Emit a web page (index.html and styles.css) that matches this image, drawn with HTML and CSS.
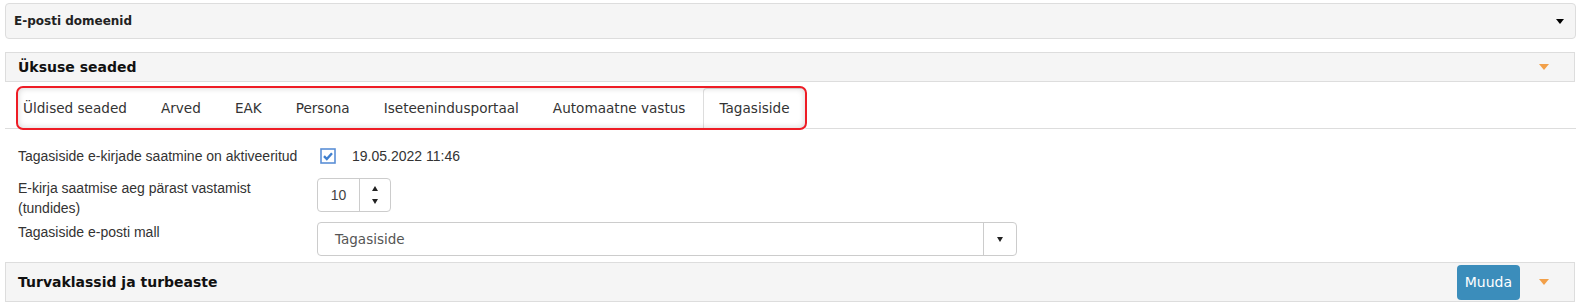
FILE: index.html
```html
<!DOCTYPE html>
<html lang="et">

<head>
    <meta charset="UTF-8">
    <meta name="viewport" content="width=device-width, initial-scale=1.0">
    <title>Üksuse seaded</title>
    <link rel="stylesheet" href="styles.css">
</head>

<body>
    <div class="page">
        <div class="panel-small">
            <span class="small-title">E-posti domeenid</span>
            <span class="caret-black"></span>
        </div>

        <div class="section">
            <div class="section-head">
                <span class="section-title">Üksuse seaded</span>
                <span class="caret-orange"></span>
            </div>

            <div class="tabs-wrap">
                <ul class="nav-tabs">
                    <li><a>Üldised seaded</a></li>
                    <li><a>Arved</a></li>
                    <li><a>EAK</a></li>
                    <li><a>Persona</a></li>
                    <li><a>Iseteenindusportaal</a></li>
                    <li><a>Automaatne vastus</a></li>
                    <li class="active"><a>Tagasiside</a></li>
                </ul>
                <div class="highlight"></div>
            </div>

            <div class="form">
                <div class="form-row check-row">
                    <label>Tagasiside e-kirjade saatmine on aktiveeritud</label>
                    <div class="check-line">
                        <span class="checkbox">
                            <svg width="16" height="16" viewBox="0 0 16 16">
                                <rect x="1" y="1" width="14" height="14" fill="#fff" stroke="#5b8fd6" stroke-width="1.6"/>
                                <path d="M4 8.2 L6.8 11 L12 5.2" fill="none" stroke="#3f7fcf" stroke-width="2.4"/>
                            </svg>
                        </span>
                        <span class="date">19.05.2022 11:46</span>
                    </div>
                </div>

                <div class="form-row">
                    <label>E-kirja saatmise aeg pärast vastamist (tundides)</label>
                    <div class="spinner">
                        <span class="spin-value">10</span>
                        <span class="spin-arrows">
                            <span class="up"></span>
                            <span class="down"></span>
                        </span>
                    </div>
                </div>

                <div class="form-row">
                    <label>Tagasiside e-posti mall</label>
                    <div class="select">
                        <span class="select-value">Tagasiside</span>
                        <span class="select-arrow"><span class="down"></span></span>
                    </div>
                </div>
            </div>
        </div>

        <div class="section-head tall">
            <span class="section-title">Turvaklassid ja turbeaste</span>
            <button class="btn-edit">Muuda</button>
            <span class="caret-orange"></span>
        </div>
    </div>
</body>

</html>
```

FILE: styles.css
```css
* {
    margin: 0;
    padding: 0;
    box-sizing: border-box;
}

body {
    background: #fff;
    font-family: 'Liberation Sans', Arial, sans-serif;
    font-size: 14px;
    color: #333;
}

.page {
    width: 1578px;
    padding: 3px 2px 0 5px;
}

.panel-small {
    height: 36px;
    border: 1px solid #ddd;
    border-radius: 4px;
    background: #f5f5f5;
    display: flex;
    align-items: center;
    justify-content: space-between;
    padding: 0 11px 0 8px;
    margin-bottom: 13px;
}

.small-title {
    font-family: 'DejaVu Sans', Verdana, sans-serif;
    font-weight: bold;
    font-size: 12px;
    color: #222;
}

.caret-black {
    width: 0;
    height: 0;
    border-left: 4px solid transparent;
    border-right: 4px solid transparent;
    border-top: 5px solid #000;
}

.caret-orange {
    width: 0;
    height: 0;
    border-left: 5.5px solid transparent;
    border-right: 5.5px solid transparent;
    border-top: 6px solid #f2a049;
}

.section-head {
    height: 30px;
    border: 1px solid #ddd;
    background: #f5f5f5;
    display: flex;
    align-items: center;
    padding: 0 25px 0 12px;
    margin-right: 1px;
}

.section-head.tall {
    height: 40px;
    margin-top: 6px;
}

.section-title {
    flex: 1;
    font-family: 'DejaVu Sans', Verdana, sans-serif;
    font-weight: bold;
    font-size: 14px;
    color: #111;
}

.btn-edit {
    height: 35px;
    padding: 0 8px;
    border: none;
    border-radius: 4px;
    background: #3b8dbb;
    color: #fff;
    font-family: 'DejaVu Sans', Verdana, sans-serif;
    font-size: 14px;
    margin-right: 19px;
}

.tabs-wrap {
    position: relative;
    margin-top: 6px;
}

.nav-tabs {
    list-style: none;
    display: flex;
    border-bottom: 1px solid #ddd;
    padding-left: 2px;
}

.nav-tabs li {
    margin-bottom: -1px;
    margin-right: 2px;
}

.nav-tabs a {
    display: block;
    padding: 10px 15px;
    line-height: 19px;
    border: 1px solid transparent;
    border-radius: 4px 4px 0 0;
    font-family: 'DejaVu Sans', Verdana, sans-serif;
    font-size: 13.6px;
    color: #333;
}

.nav-tabs .active a {
    background: #fff;
    border-color: #ddd #ddd transparent;
}

/* red annotation frame around the tabs */
.highlight {
    position: absolute;
    left: 11px;
    top: -2px;
    width: 791px;
    height: 44px;
    border: 2px solid #ee1c25;
    border-radius: 7px;
    box-shadow: inset 0 0 6px rgba(0, 0, 0, 0.18);
    pointer-events: none;
}

.form {
    padding: 17px 0 0 13px;
}

.form-row {
    display: grid;
    grid-template-columns: 299px 1fr;
    align-items: start;
    margin-bottom: 4px;
}

.form-row label {
    line-height: 20px;
    padding-right: 15px;
}

.check-row {
    align-items: center;
    margin-bottom: 12px;
}

.check-line {
    display: flex;
    align-items: center;
}

.checkbox {
    display: flex;
    margin-left: 3px;
    margin-right: 16px;
}

.spinner {
    display: flex;
    width: 74px;
    height: 34px;
    border: 1px solid #ccc;
    border-radius: 4px;
}

.spin-value {
    width: 42px;
    border-right: 1px solid #ccc;
    display: flex;
    align-items: center;
    justify-content: center;
    color: #444;
}

.spin-arrows {
    flex: 1;
    display: flex;
    flex-direction: column;
    align-items: center;
    justify-content: center;
    gap: 8px;
}

.up {
    width: 0;
    height: 0;
    border-left: 3.5px solid transparent;
    border-right: 3.5px solid transparent;
    border-bottom: 5px solid #222;
}

.down {
    width: 0;
    height: 0;
    border-left: 3.5px solid transparent;
    border-right: 3.5px solid transparent;
    border-top: 5px solid #222;
}

.select {
    display: flex;
    width: 700px;
    height: 34px;
    border: 1px solid #ccc;
    border-radius: 4px;
}

.select-value {
    flex: 1;
    display: flex;
    align-items: center;
    padding-left: 17px;
    font-family: 'DejaVu Sans', Verdana, sans-serif;
    font-size: 13.5px;
    color: #555;
}

.select-arrow {
    width: 33px;
    border-left: 1px solid #ccc;
    display: flex;
    align-items: center;
    justify-content: center;
}
```
